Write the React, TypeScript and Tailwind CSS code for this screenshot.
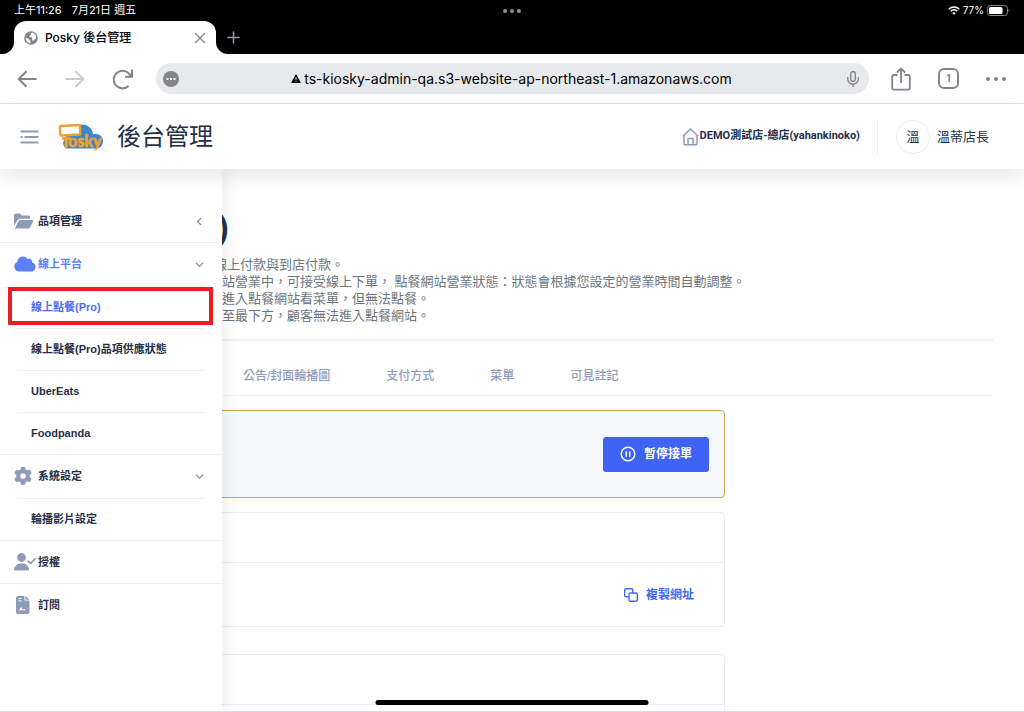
import { ReactNode, useState } from 'react'
import { Plus, X, Mic } from 'lucide-react'
import clsx from 'clsx'

interface SubItem {
  label: string
  active?: boolean
}

interface MenuItem {
  label: string
  icon: ReactNode
  active?: boolean
  chevron?: 'left' | 'down'
  children?: SubItem[]
}

const FolderIcon = () => (
  <svg width="20" height="16" viewBox="0 0 20 16" fill="currentColor" aria-hidden="true">
    <path d="M0 13V2.2A1.8 1.8 0 0 1 1.8.4h4L8 2.5h6.2A1.8 1.8 0 0 1 16 4.3v1.4H6.2a3 3 0 0 0-2.7 1.6z" />
    <path d="M.8 15.4 4.5 8a1.9 1.9 0 0 1 1.7-1.1h12.5a.7.7 0 0 1 .6 1l-3.1 6.4a1.9 1.9 0 0 1-1.7 1.1z" />
  </svg>
)

const CloudIcon = () => (
  <svg width="22" height="16" viewBox="0 0 22 16" fill="currentColor" aria-hidden="true">
    <path d="M5 15.5A5 5 0 0 1 3.4 5.9 5.6 5.6 0 0 1 13.6 3a3.4 3.4 0 0 1 4.7 3.7 4.5 4.5 0 0 1-.9 8.8z" />
  </svg>
)

const GearIcon = () => (
  <svg width="18" height="18" viewBox="0 0 512 512" fill="currentColor" aria-hidden="true">
    <path d="M495.9 166.6c3.2 8.7.5 18.4-6.4 24.6l-43.3 39.4c1.1 8.3 1.7 16.8 1.7 25.4s-.6 17.1-1.7 25.4l43.3 39.4c6.9 6.2 9.6 15.9 6.4 24.6a233 233 0 0 1-15.8 34.3l-4.7 8.1a251 251 0 0 1-22.1 31.2c-5.9 7.2-15.7 9.6-24.5 6.8l-55.7-17.7a222 222 0 0 1-44 25.4l-12.5 57.1c-2 9.1-9 16.3-18.2 17.8a258 258 0 0 1-84.5 0c-9.2-1.5-16.2-8.7-18.2-17.8l-12.5-57.1a222 222 0 0 1-44-25.4l-55.6 17.8c-8.8 2.8-18.6.3-24.5-6.8a251 251 0 0 1-22.1-31.2l-4.7-8.1a233 233 0 0 1-15.8-34.3c-3.2-8.7-.5-18.4 6.4-24.6l43.3-39.4a196 196 0 0 1 0-50.9l-43.3-39.4c-6.9-6.2-9.6-15.9-6.4-24.6a233 233 0 0 1 15.8-34.3l4.7-8.1A251 251 0 0 1 59.5 83.3c5.9-7.2 15.7-9.6 24.5-6.8l55.7 17.7a222 222 0 0 1 44-25.4l12.5-57.1c2-9.1 9-16.3 18.2-17.8a258 258 0 0 1 84.5 0c9.2 1.5 16.2 8.7 18.2 17.8l12.5 57.1a222 222 0 0 1 44 25.4l55.7-17.7c8.8-2.8 18.6-.3 24.5 6.8a251 251 0 0 1 22.1 31.2l4.7 8.1a233 233 0 0 1 15.8 34.3zM256 336a80 80 0 1 0 0-160 80 80 0 1 0 0 160z" />
  </svg>
)

const UserCheckIcon = () => (
  <svg width="22" height="18" viewBox="0 0 22 18" fill="currentColor" aria-hidden="true">
    <circle cx="7.5" cy="4.5" r="4.4" />
    <path d="M0 16.8a6.300 6.300 0 0 1 6.300-6.200h2.500a6.300 6.300 0 0 1 6.300 6.200c0 .5-.4.8-.9.8H.8a.8.8 0 0 1-.8-.8z" />
    <path d="m14.300 8.200 2.300 2.200 4.400-4.500" fill="none" stroke="currentColor" strokeWidth="1.7" strokeLinecap="round" strokeLinejoin="round" />
  </svg>
)

const ContractIcon = () => (
  <svg width="14" height="18" viewBox="0 0 14 18" aria-hidden="true">
    <path d="M2 0h6.500v4.500h5V16a2 2 0 0 1-2 2H2a2 2 0 0 1-2-2V2a2 2 0 0 1 2-2z" fill="currentColor" />
    <path d="M9.500 0 13.500 3.700h-4z" fill="currentColor" />
    <path d="M2.500 2.600h3M2.500 4.900h3" fill="none" stroke="#fff" strokeWidth="1" />
    <path d="M2.500 14.300c1.500 0 1.800-3 2.800-3s.8 2.300 1.700 2.300 1-.9 1.600-.6c.5.400.6 1.300 2.700 1.300z" fill="#fff" />
  </svg>
)

const HomeIcon = () => (
  <svg width="17" height="18" viewBox="0 0 17 18" fill="none" stroke="currentColor" strokeWidth="1.5" strokeLinejoin="round" aria-hidden="true">
    <path d="M.8 8.200 8.500 1l7.700 7.200M2 7.300v8.500a1 1 0 0 0 1 1h11a1 1 0 0 0 1-1V7.300" />
    <path d="M6 16.800V10.500h5v6.300" />
  </svg>
)

const Logo = () => (
  <svg width="46" height="28" viewBox="0 0 46 28" role="img" aria-label="Posky">
    <path d="M9 25.500a5.500 5.500 0 0 1-1-10C10 7 16 1.500 24 1.500c6.500 0 10.500 4.500 11 10 5-1.500 10 1.500 10 6.500 0 4-3 7.500-6 7.500z" fill="#3b86c8" />
    <rect x="2" y="2.500" width="20" height="9.500" rx="1" fill="#fff" stroke="#f0a030" strokeWidth="2.400" transform="rotate(-3 12 7)" />
    <path d="M5.500 15.500h6M8.200 15v9" stroke="#f0a030" strokeWidth="3.200" strokeLinecap="round" />
    <text x="10" y="24" fontFamily="Lato, sans-serif" fontSize="16" fontWeight="900" fill="#f0a030" stroke="#f0a030" strokeWidth=".6">
      osky
    </text>
  </svg>
)

const Chevron = ({ dir }: { dir: 'left' | 'down' }) => (
  <svg width="9" height="9" viewBox="0 0 8 8" fill="none" stroke="#8f9bba" strokeWidth="1.300" aria-hidden="true">
    <path d={dir === 'left' ? 'M5.500.8 2.300 4l3.200 3.200' : 'M.8 2.400 4 5.600l3.200-3.200'} />
  </svg>
)

const menu: MenuItem[] = [
  { label: '品項管理', icon: <FolderIcon />, chevron: 'left' },
  {
    label: '線上平台',
    icon: <CloudIcon />,
    active: true,
    chevron: 'down',
    children: [
      { label: '線上點餐(Pro)', active: true },
      { label: '線上點餐(Pro)品項供應狀態' },
      { label: 'UberEats' },
      { label: 'Foodpanda' },
    ],
  },
  { label: '系統設定', icon: <GearIcon />, chevron: 'down', children: [{ label: '輪播影片設定' }] },
  { label: '授權', icon: <UserCheckIcon /> },
  { label: '訂閱', icon: <ContractIcon /> },
]

const tabs = ['公告/封面輪播圖', '支付方式', '菜單', '可見註記']

const StatusBar = () => (
  <div className="grid h-[21px] grid-cols-3 items-center px-3.5 text-[11px] text-white">
    <div className="flex gap-2.5">
      <span>上午11:26</span>
      <span>7月21日 週五</span>
    </div>
    <div className="flex justify-center gap-[3px]">
      <span className="size-1 rounded-full bg-[#8e8e93]" />
      <span className="size-1 rounded-full bg-[#8e8e93]" />
      <span className="size-1 rounded-full bg-[#8e8e93]" />
    </div>
    <div className="flex items-center justify-end gap-[3px]">
      <svg width="12" height="9" viewBox="0 0 12 9" fill="none" stroke="#fff" strokeWidth="1.600" aria-hidden="true">
        <path d="M.8 3.200a7.400 7.400 0 0 1 10.400 0M2.700 5.200a4.700 4.700 0 0 1 6.600 0" />
        <path d="M6 8.800 4.300 7a2.500 2.500 0 0 1 3.400 0z" fill="#fff" stroke="none" />
      </svg>
      <span className="text-[10px]">77%</span>
      <svg width="23" height="11" viewBox="0 0 23 11" aria-hidden="true">
        <rect x=".5" y=".5" width="20" height="10" rx="3" fill="none" stroke="#8a8a8a" />
        <rect x="2" y="2" width="13.500" height="7" rx="1.500" fill="#fff" />
        <path d="M21.700 4v3c.9-.3.900-2.700 0-3z" fill="#8a8a8a" />
      </svg>
    </div>
  </div>
)

const TabStrip = () => (
  <div className="flex h-[33px] items-stretch">
    <div className="flex bg-white">
      <span className="w-3.5 rounded-br-xl bg-black" />
    </div>
    <div className="bg-black">
      <div className="flex h-full w-[202px] items-center rounded-t-xl bg-white pl-2.5 pr-[7px]">
        <svg width="14" height="14" viewBox="0 0 14 14" aria-hidden="true">
          <circle cx="7" cy="7" r="6.800" fill="#80868b" />
          <path d="M8.300 1.600c-1 .4-1.500 1-1.300 1.900-.2 1-1.500.7-1.700 1.800-.1.800.6 1 1.600 1 1.600.1 1.600 1.300 1.200 2.100-.3.800.3 1.400 1 1.200.900-.300 1.100-1.200 2-1.700.6-.4.900-.8 1-1.300A5.300 5.300 0 0 0 8.300 1.600zM1.700 7.300c1.600-.1 3.300.2 3.700 1.500.3.900 1.300.8 1.200 1.900l-.3 1.600a5.300 5.300 0 0 1-4.600-5z" fill="#fff" />
        </svg>
        <span className="ml-[7px] flex-1 text-xs font-medium text-black">Posky 後台管理</span>
        <button type="button" aria-label="關閉分頁" className="text-[#80868b]">
          <X size={18} strokeWidth={1.8} />
        </button>
      </div>
    </div>
    <div className="bg-white">
      <div className="flex h-full items-center rounded-bl-xl bg-black pl-2">
        <button type="button" aria-label="新增分頁" className="text-[#9aa0a6]">
          <Plus size={19} strokeWidth={1.8} />
        </button>
      </div>
    </div>
  </div>
)

const Toolbar = () => {
  const [url, setUrl] = useState('ts-kiosky-admin-qa.s3-website-ap-northeast-1.amazonaws.com')

  return (
    <div className="flex h-[50px] items-center border-b border-[#dfe0e2] bg-white px-[17px] text-[#80868b]">
      <div className="flex items-center gap-7">
        <button type="button" aria-label="上一頁">
          <svg width="20" height="18" viewBox="0 0 20 18" fill="none" stroke="currentColor" strokeWidth="2">
            <path d="M19.500 9H2M9.500 1.200 1.700 9l7.800 7.800" />
          </svg>
        </button>
        <button type="button" aria-label="下一頁" className="text-[#c8cacd]">
          <svg width="20" height="18" viewBox="0 0 20 18" fill="none" stroke="currentColor" strokeWidth="2">
            <path d="M.5 9H18M10.500 1.200 18.300 9l-7.800 7.800" />
          </svg>
        </button>
        <button type="button" aria-label="重新載入">
          <svg width="21" height="22" viewBox="0 0 21 22" fill="none" stroke="currentColor" strokeWidth="2">
            <path d="M15.600 18a8.800 8.800 0 1 1 2.200-9.500M19 1.500v7.200h-7" />
          </svg>
        </button>
      </div>
      <div className="ml-[22px] flex h-[31px] flex-1 items-center rounded-full bg-[#e8e9ed] px-[7px]">
        <svg width="16" height="16" viewBox="0 0 16 16" aria-hidden="true">
          <circle cx="8" cy="8" r="8" fill="#80868b" />
          <path d="M3.500 7h2v2h-2zM7 7h2v2H7zM10.500 7h2v2h-2z" fill="#fff" />
        </svg>
        <div className="flex flex-1 items-center justify-center gap-[3px] text-black">
          <svg width="10" height="9" viewBox="0 0 10 9" aria-hidden="true">
            <path d="M5 0 10 9H0z" />
            <path d="M5 3v3M5 6.800v1" stroke="#fff" strokeWidth=".9" />
          </svg>
          <input
            aria-label="網址"
            className="field-sizing-content bg-transparent text-sm outline-none"
            value={url}
            onChange={(e) => setUrl(e.target.value)}
          />
        </div>
        <button type="button" aria-label="語音搜尋">
          <Mic size={18} strokeWidth={1.8} />
        </button>
      </div>
      <div className="ml-[22px] flex items-center gap-[27px] pr-px">
        <button type="button" aria-label="分享">
          <svg width="20" height="24" viewBox="0 0 20 24" fill="none" stroke="currentColor" strokeWidth="1.800">
            <path d="M6.500 8H3a1.800 1.800 0 0 0-1.800 1.800v11A1.800 1.800 0 0 0 3 22.600h14a1.800 1.800 0 0 0 1.800-1.800v-11A1.800 1.800 0 0 0 17 8h-3.500M10 16V1.800M5.800 5.700 10 1.500l4.200 4.200" />
          </svg>
        </button>
        <button
          type="button"
          aria-label="分頁"
          className="flex size-[21px] items-center justify-center rounded-md border-2 border-[#80868b] text-[10px] font-bold"
        >
          1
        </button>
        <button type="button" aria-label="更多" className="flex gap-1">
          <span className="size-1 rounded-full bg-[#80868b]" />
          <span className="size-1 rounded-full bg-[#80868b]" />
          <span className="size-1 rounded-full bg-[#80868b]" />
        </button>
      </div>
    </div>
  )
}

const AppHeader = () => (
  <header className="relative z-20 flex h-[65px] items-center bg-white pl-5 pr-[35px] text-[#252f4a] shadow-[0_8px_20px_rgba(0,0,0,0.09)]">
    <button type="button" aria-label="選單" className="text-[#8f9bba]">
      <svg width="19" height="14" viewBox="0 0 19 14" fill="none" stroke="currentColor" strokeWidth="1.800">
        <path d="M.5 1.500h18M4.500 7h14M.5 12.500h18M.5 7h2" />
      </svg>
    </button>
    <a href="#home" className="ml-[19px] flex items-center gap-[13px]">
      <Logo />
      <span className="text-2xl">後台管理</span>
    </a>
    <div className="ml-auto flex items-center">
      <span className="text-[#8f9bba]">
        <HomeIcon />
      </span>
      <span className="ml-px font-['Roboto','Noto_Sans_CJK_TC',sans-serif] text-[11px] font-bold">
        DEMO測試店-總店(yahankinoko)
      </span>
      <span className="ml-[17px] h-[34px] w-px bg-[#eceef5]" />
      <span className="ml-[18px] flex size-[34px] items-center justify-center rounded-full border border-[#eceef3] text-[13px]">溫</span>
      <span className="ml-[7px] text-[13px]">溫蒂店長</span>
    </div>
  </header>
)

const Sidebar = () => (
  <nav className="absolute inset-y-0 left-0 z-10 w-[222px] bg-white pt-[31px] text-[11px] font-bold text-[#252f4a] shadow-[4px_0_16px_rgba(0,0,0,0.07)]">
    <ul>
      {menu.map((item, i) => (
        <li key={item.label} className={clsx(i < menu.length - 1 && 'border-b border-[#eff0f5]')}>
          <a
            href="#menu"
            className={clsx('flex h-[42px] items-center pl-3.5 pr-[18px]', item.active && 'text-[#5b80f7]')}
          >
            <span className={clsx('flex w-6 items-center', !item.active && 'text-[#8f9bba]', i === 4 && 'pl-0.5')}>
              {item.icon}
            </span>
            <span className="flex-1">{item.label}</span>
            {item.chevron && <Chevron dir={item.chevron} />}
          </a>
          {item.children && (
            <ul className="pt-px">
              {item.children.map((sub) => (
                <li key={sub.label} className="relative px-[17px]">
                  <a
                    href="#sub"
                    className={clsx(
                      'flex h-[42px] items-center border-t border-[#eff0f5] pl-3.5',
                      sub.active && 'text-[#4c6ef5]',
                    )}
                  >
                    {sub.label}
                  </a>
                  {sub.active && (
                    <span className="pointer-events-none absolute bottom-[3px] left-2 right-[9px] top-px border-4 border-[#ed1c24]" />
                  )}
                </li>
              ))}
            </ul>
          )}
        </li>
      ))}
    </ul>
  </nav>
)

const Content = () => (
  <main className="flex-1 px-[31px] pt-[38px]">
    <div className="pl-[187px]">
      <h1 className="h-[49px] text-[32px] font-bold leading-10 text-[#252f4a]">)</h1>
    </div>
    <div className="border-b-2 border-[#f1f1f3] pb-[15px] text-[13px] leading-[17px] text-[#6c757d]">
      <p className="pl-[183px]">線上付款與到店付款。</p>
      <p className="pl-[191px]">站營業中，可接受線上下單， 點餐網站營業狀態：狀態會根據您設定的營業時間自動調整。</p>
      <p className="pl-[191px]">進入點餐網站看菜單，但無法點餐。</p>
      <p className="pl-[191px]">至最下方，顧客無法進入點餐網站。</p>
    </div>
    <div className="flex gap-14 border-b border-[#eff0f2] pb-[9px] pl-[212px] pt-[25px]">
      {tabs.map((tab) => (
        <button key={tab} type="button" className="text-xs font-medium leading-5 text-[#8f9bba]">
          {tab}
        </button>
      ))}
    </div>
    <div className="mt-3.5 flex w-full max-w-[694px] flex-col">
      <section className="flex h-[88px] items-center justify-end rounded border border-[#cc9f5e] bg-[#f7f8fc] pr-[15px]">
        <button type="button" className="flex h-[35px] items-center gap-2 rounded-[3px] bg-[#3f63f6] px-[17px] text-xs font-bold text-white">
          <svg width="16" height="16" viewBox="0 0 16 16" fill="none" stroke="currentColor" strokeWidth="1.400" aria-hidden="true">
            <circle cx="8" cy="8" r="6.800" />
            <path d="M6.300 5.300v5.400M9.700 5.300v5.400" />
          </svg>
          暫停接單
        </button>
      </section>
      <section className="mt-3.5 rounded border border-[#e9ecf5]">
        <div className="h-[50px] border-b border-[#e9ecf5]" />
        <div className="flex h-[63px] items-center justify-end pr-[30px]">
          <button type="button" className="flex items-center gap-2 text-xs font-bold text-[#4468f6]">
            <svg width="14" height="14" viewBox="0 0 14 14" fill="none" stroke="currentColor" strokeWidth="1.400" aria-hidden="true">
              <path d="M4.800 8.700H2a1.300 1.300 0 0 1-1.300-1.300V2A1.300 1.300 0 0 1 2 .7h5.400A1.300 1.300 0 0 1 8.700 2v2.800" />
              <rect x="5" y="5" width="8.300" height="8.300" rx="1.300" />
            </svg>
            複製網址
          </button>
        </div>
      </section>
      <section className="mt-[27px] rounded border border-[#e9ecf5]">
        <div className="h-[50px] border-b border-[#e9ecf5]" />
        <div className="h-[63px]" />
      </section>
    </div>
  </main>
)

export default function App() {
  return (
    <div className="relative flex h-screen flex-col overflow-hidden bg-white font-['Liberation_Sans','Noto_Sans_CJK_TC',sans-serif]">
      <div className="shrink-0 font-['Inter','Noto_Sans_CJK_TC',sans-serif]">
        <div className="bg-black">
          <StatusBar />
          <TabStrip />
        </div>
        <Toolbar />
      </div>
      <div className="flex min-h-0 flex-1 flex-col border-b border-[#dcdcdf]">
        <AppHeader />
        <div className="relative flex min-h-0 flex-1 overflow-hidden">
          <Sidebar />
          <Content />
        </div>
      </div>
      <div className="absolute bottom-[7px] left-1/2 z-30 h-[5px] w-[273px] -translate-x-1/2 rounded-full bg-black" />
    </div>
  )
}
